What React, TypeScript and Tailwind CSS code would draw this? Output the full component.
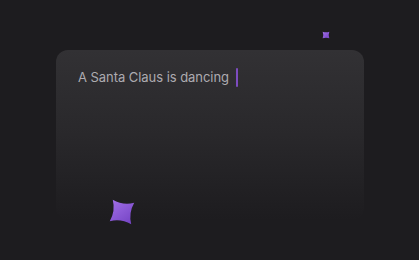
import React from "react";

const Sparkle: React.FC<{ className?: string }> = ({ className }) => (
  <svg viewBox="0 0 24 24" className={className}>
    <defs>
      <linearGradient id="spk" x1="0" y1="0" x2="1" y2="1">
        <stop offset="0%" stopColor="#a06ee6" />
        <stop offset="100%" stopColor="#7443c4" />
      </linearGradient>
    </defs>
    <path
      d="M2 2 Q12 6 22 2 Q18 12 22 22 Q12 18 2 22 Q6 12 2 2 Z"
      fill="url(#spk)"
    />
  </svg>
);

const App: React.FC = () => {
  return (
    <div
      className="relative w-[419px] h-[260px] overflow-hidden bg-[#1d1c1f] pt-[50px] pl-[56px]"
      style={{ fontFamily: "Inter, 'Noto Sans', sans-serif" }}
    >
      <div className="w-[308px] h-[170px] rounded-[12px] bg-gradient-to-b from-[#323134] via-[#29282b] to-[#1d1c1f] px-[22px] pt-[18px]">
        <div className="flex items-center gap-[7px]">
          <span className="text-[13px] text-[#adabb0] tracking-[-0.05px]">A Santa Claus is dancing</span>
          <span className="w-[2px] h-[19px] bg-[#7d4cc0] rounded-sm" />
        </div>
      </div>

      <Sparkle className="absolute left-[109px] top-[199px] w-[26px] h-[26px] rotate-[8deg]" />
      <Sparkle className="absolute left-[322px] top-[31px] w-[8px] h-[8px]" />
    </div>
  );
};

export default App;
